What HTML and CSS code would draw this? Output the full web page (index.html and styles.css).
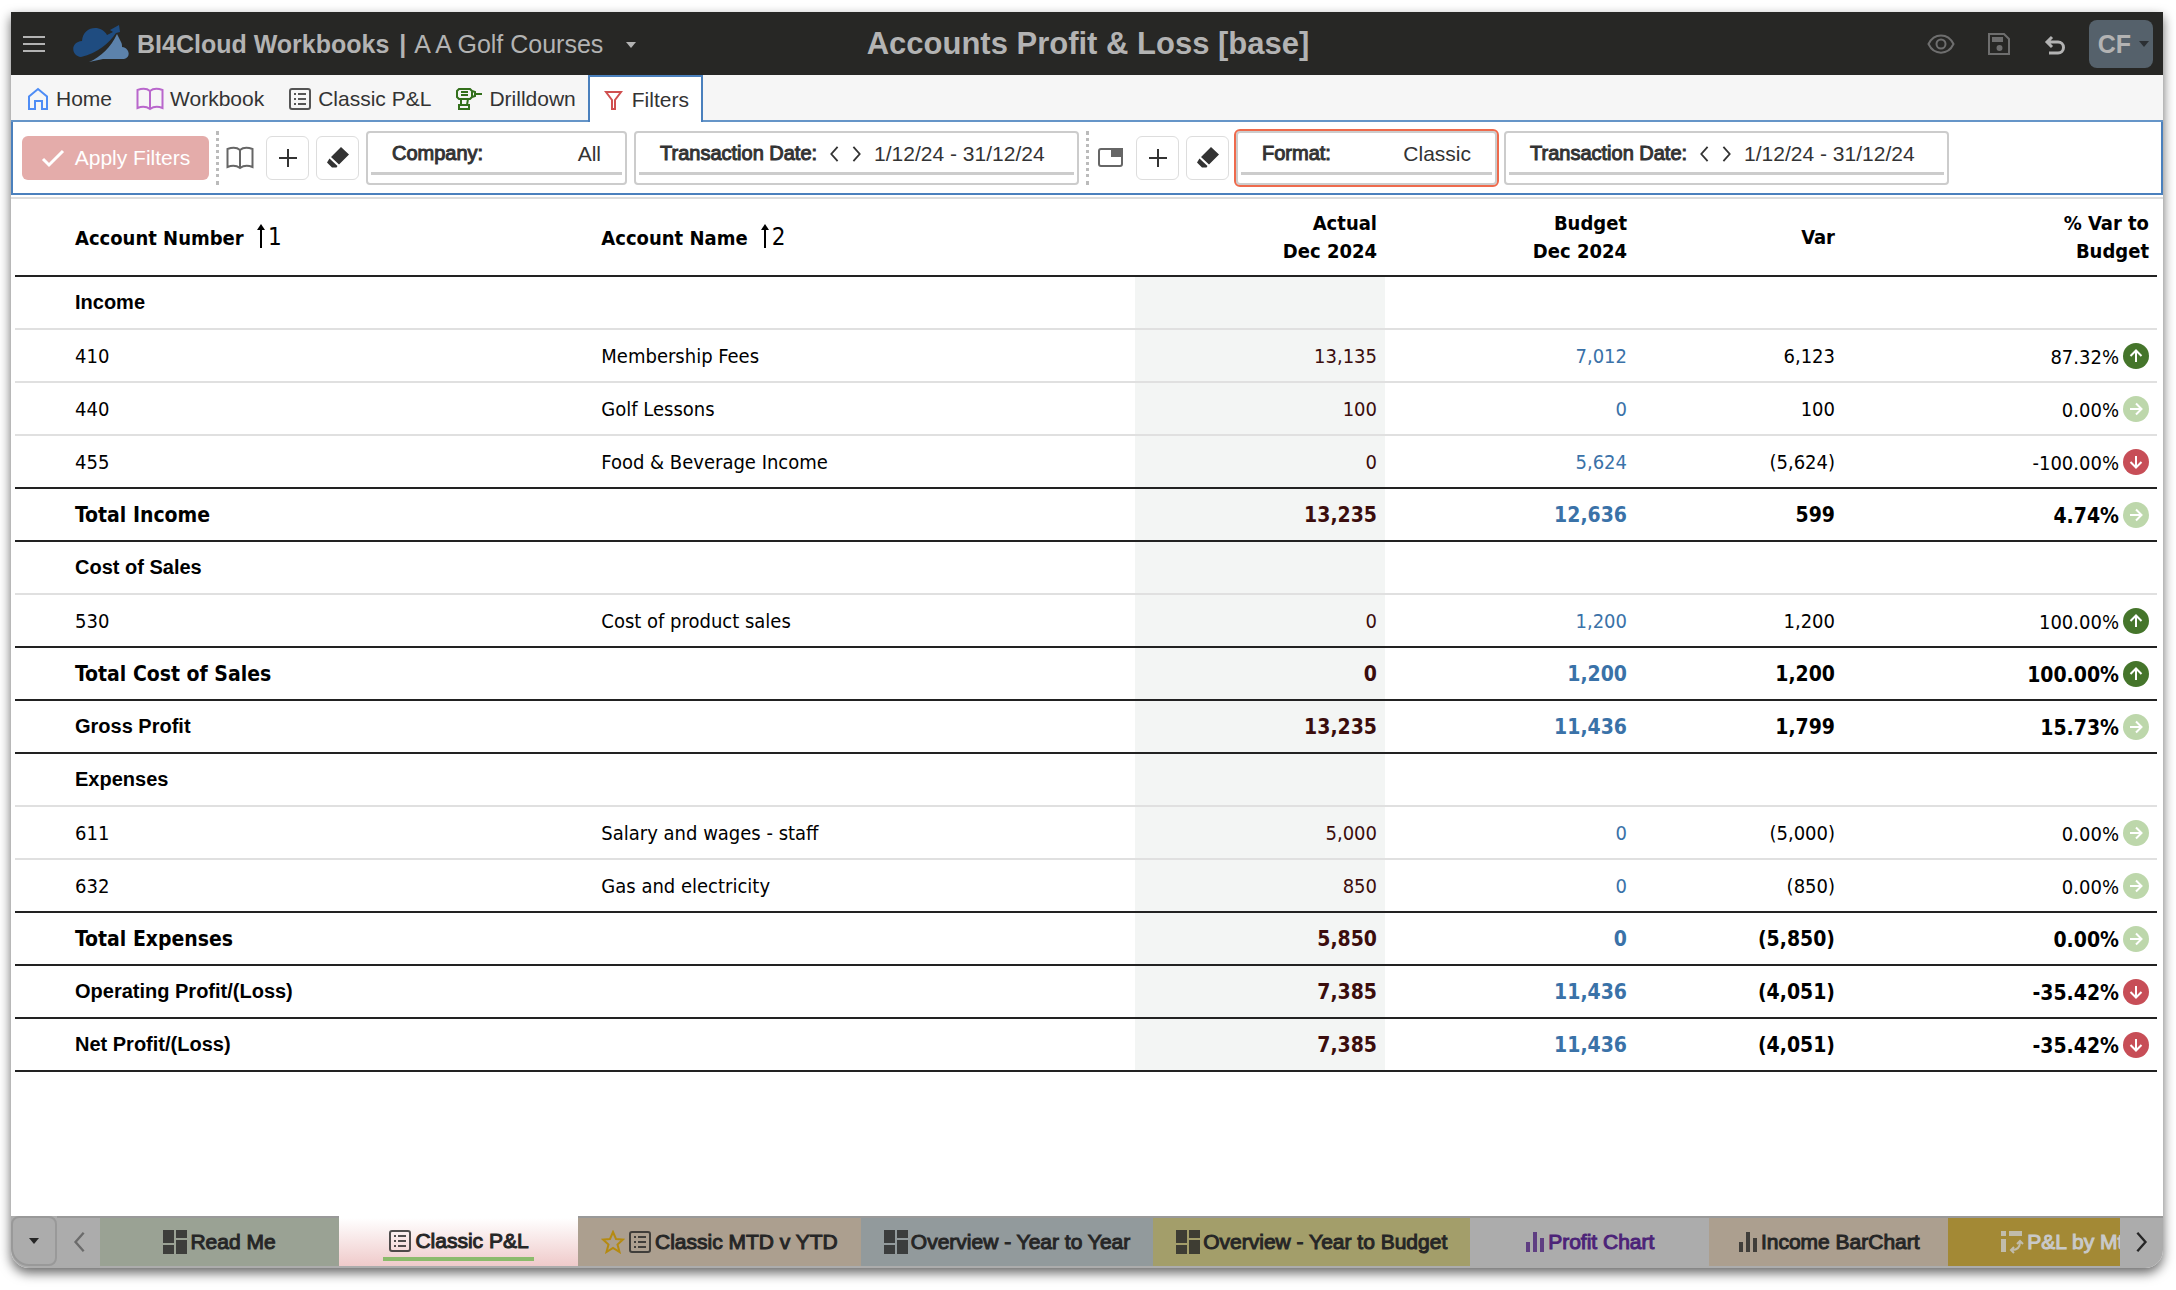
FILE: index.html
```
<!DOCTYPE html>
<html lang="en">
<head>
  <meta charset="UTF-8" />
  <meta name="viewport" content="width=device-width, initial-scale=1.0" />
  <title>BI4Cloud Workbooks - Accounts Profit &amp; Loss</title>
  <link rel="stylesheet" href="styles.css">
</head>
<body>
  <!-- shared icons -->
  <svg class="sprite" aria-hidden="true">
    <symbol id="i-book" viewBox="0 0 28 24"><path d="M14 4C11 1.500 6 1.500 1.500 3v18c4-1.500 9-1.500 12.500 1 3.500-2.500 8.500-2.500 12.500-1V3c-4.500-1.500-9.500-1.500-12.500 1zm0 0v18"/></symbol>
    <symbol id="i-list" viewBox="0 0 24 24"><rect x="2" y="2" width="20" height="20" rx="2"/><path d="M6 7h2M10 7h8M6 12h2M10 12h8M6 17h2M10 17h8"/></symbol>
    <symbol id="i-dash" viewBox="0 0 24 24"><path d="M0 0h11v13H0zM13 0h11v8H13zM0 15h11v9H0zM13 10h11v14H13z"/></symbol>
    <symbol id="i-bars" viewBox="0 0 20 20"><path d="M1 10h4v10H1zM8 0h4v20H8zM15 6h4v14h-4z"/></symbol>
    <symbol id="i-plus" viewBox="0 0 24 24"><path d="M12 3v18M3 12h18"/></symbol>
    <symbol id="i-eraser" viewBox="0 0 24 24"><path d="M15 1l8 7.500L13 18.500 5 11zM3.500 12.500l8 7.500-1 1.500H6L1 16.500z"/></symbol>
    <symbol id="i-prev" viewBox="0 0 12 20"><path d="M10 2L3 10l7 8"/></symbol>
    <symbol id="i-next" viewBox="0 0 12 20"><path d="M2 2l7 8-7 8"/></symbol>
    <symbol id="i-sort" viewBox="0 0 10 24"><path d="M5 24V3"/><path d="M5 0l4 6H1z" fill="currentColor" stroke="none"/></symbol>
    <symbol id="i-up" viewBox="0 0 26 26"><circle cx="13" cy="13" r="13" fill="#45752b" stroke="none"/><path d="M13 19V7.500M7.500 13L13 7.500l5.500 5.500"/></symbol>
    <symbol id="i-flat" viewBox="0 0 26 26"><circle cx="13" cy="13" r="13" fill="#bdd7ab" stroke="none"/><path d="M7 13h11.500M13 7.500l5.500 5.500-5.500 5.500"/></symbol>
    <symbol id="i-down" viewBox="0 0 26 26"><circle cx="13" cy="13" r="13" fill="#c74e57" stroke="none"/><path d="M13 7v11.500M7.500 13l5.500 5.500 5.500-5.500"/></symbol>
  </svg>

  <div class="app">
    <header class="topbar">
      <div class="brand">
        <button class="plain" aria-label="Menu"><svg class="burger" viewBox="0 0 22 18"><path d="M0 2h22M0 9h22M0 16h22"/></svg></button>
        <svg class="logo" viewBox="0 0 56 38"><path d="M8 32C-2 31-3 17 9 16 10 1 28-1 34 10L40 7 37 5 46 0 47 7 43 8C36 18 25 28 8 32z" fill="#1f4c80"/><path d="M16 37C28 32 38 22 44 9l4 8c1 2 1 3 1 5 8 1 9 11 2 12H30z" fill="#5c82ab"/></svg>
        <span class="brand-name">BI4Cloud Workbooks</span>
        <span class="brand-sep">|</span>
        <button class="plain company">A A Golf Courses <span class="caret"></span></button>
      </div>
      <h1>Accounts Profit &amp; Loss [base]</h1>
      <div class="tools">
        <button class="plain dim" aria-label="View"><svg class="icon wide" viewBox="0 0 28 24"><path d="M1.500 12C7 0.500 21 0.500 26.500 12 21 23.500 7 23.500 1.500 12z"/><circle cx="14" cy="12" r="4.500"/></svg></button>
        <button class="plain dim" aria-label="Save"><svg class="icon" viewBox="0 0 24 24"><path d="M2 2h15l5 5v15H2z"/><path d="M6 6h9v3H6z" fill="currentColor"/><circle cx="12.500" cy="16" r="2" fill="currentColor"/></svg></button>
        <button class="plain" aria-label="Undo"><svg class="icon undo" viewBox="0 0 24 24"><path d="M9 5L4 10l5 5M4 10h11a5 5 0 0 1 0 11H6"/></svg></button>
        <button class="user">CF <span class="caret"></span></button>
      </div>
    </header>

    <nav class="ribbon">
      <a href="#" class="home"><svg class="icon" viewBox="0 0 24 24"><path d="M3 9.500L12 2l9 7.500V22h-5v-8H9v8H3z"/></svg>Home</a>
      <a href="#" class="workbook"><svg class="icon wide"><use href="#i-book"/></svg>Workbook</a>
      <a href="#" class="classic"><svg class="icon"><use href="#i-list"/></svg>Classic P&amp;L</a>
      <a href="#" class="drill"><svg class="icon wide" viewBox="0 0 28 24"><path d="M4 2h11l2 2v6l-2 2H4l-2-2V4zM17 4l3 1v4l-3 1M20 7h7M6 5h7M6 8h7M6 12v6h6l1-6M4 18h10v4H4z"/></svg>Drilldown</a>
      <a href="#" class="filters active"><svg class="icon" viewBox="0 0 24 24"><path d="M4 4h15l-6 8v9h-3v-9z"/></svg>Filters</a>
    </nav>

    <section class="filterbar">
      <button class="apply" disabled><svg class="icon" viewBox="0 0 24 24"><path d="M2 13l6 6L22 5"/></svg>Apply Filters</button>
      <span class="grip"></span>
      <svg class="icon wide scope"><use href="#i-book"/></svg>
      <button class="square" aria-label="Add filter"><svg class="icon"><use href="#i-plus"/></svg></button>
      <button class="square" aria-label="Clear filters"><svg class="icon solid"><use href="#i-eraser"/></svg></button>
      <button class="filter short"><span class="row"><b>Company:</b><span>All</span></span></button>
      <button class="filter date"><span class="row"><b>Transaction Date:</b><svg class="step"><use href="#i-prev"/></svg><svg class="step"><use href="#i-next"/></svg><span>1/12/24 - 31/12/24</span></span></button>
      <span class="grip"></span>
      <svg class="icon wide scope" viewBox="0 0 28 24"><rect x="3" y="3" width="23" height="17" rx="2"/><path d="M16 3h10v7H16z" fill="currentColor"/></svg>
      <button class="square" aria-label="Add sheet filter"><svg class="icon"><use href="#i-plus"/></svg></button>
      <button class="square" aria-label="Clear sheet filters"><svg class="icon solid"><use href="#i-eraser"/></svg></button>
      <button class="filter short marked"><span class="row"><b>Format:</b><span>Classic</span></span></button>
      <button class="filter date"><span class="row"><b>Transaction Date:</b><svg class="step"><use href="#i-prev"/></svg><svg class="step"><use href="#i-next"/></svg><span>1/12/24 - 31/12/24</span></span></button>
    </section>

    <main>
      <table class="report">
        <colgroup><col class="c-num"><col><col class="c-amount"><col class="c-amount"><col class="c-var"><col class="c-pct"></colgroup>
        <thead>
          <tr>
            <th>Account Number <span class="sort"><svg><use href="#i-sort"/></svg>1</span></th>
            <th>Account Name <span class="sort"><svg><use href="#i-sort"/></svg>2</span></th>
            <th>Actual<br>Dec 2024</th>
            <th>Budget<br>Dec 2024</th>
            <th>Var</th>
            <th>% Var to<br>Budget</th>
          </tr>
        </thead>
        <tbody>
          <tr class="section"><td>Income</td><td></td><td></td><td></td><td></td><td></td></tr>
          <tr><td>410</td><td>Membership Fees</td><td>13,135</td><td>7,012</td><td>6,123</td><td>87.32%<svg class="trend"><use href="#i-up"/></svg></td></tr>
          <tr><td>440</td><td>Golf Lessons</td><td>100</td><td>0</td><td>100</td><td>0.00%<svg class="trend"><use href="#i-flat"/></svg></td></tr>
          <tr class="ruled"><td>455</td><td>Food &amp; Beverage Income</td><td>0</td><td>5,624</td><td>(5,624)</td><td>-100.00%<svg class="trend"><use href="#i-down"/></svg></td></tr>
          <tr class="total ruled"><td>Total Income</td><td></td><td>13,235</td><td>12,636</td><td>599</td><td>4.74%<svg class="trend"><use href="#i-flat"/></svg></td></tr>
          <tr class="section"><td>Cost of Sales</td><td></td><td></td><td></td><td></td><td></td></tr>
          <tr class="ruled"><td>530</td><td>Cost of product sales</td><td>0</td><td>1,200</td><td>1,200</td><td>100.00%<svg class="trend"><use href="#i-up"/></svg></td></tr>
          <tr class="total ruled"><td>Total Cost of Sales</td><td></td><td>0</td><td>1,200</td><td>1,200</td><td>100.00%<svg class="trend"><use href="#i-up"/></svg></td></tr>
          <tr class="total summary ruled"><td>Gross Profit</td><td></td><td>13,235</td><td>11,436</td><td>1,799</td><td>15.73%<svg class="trend"><use href="#i-flat"/></svg></td></tr>
          <tr class="section"><td>Expenses</td><td></td><td></td><td></td><td></td><td></td></tr>
          <tr><td>611</td><td>Salary and wages - staff</td><td>5,000</td><td>0</td><td>(5,000)</td><td>0.00%<svg class="trend"><use href="#i-flat"/></svg></td></tr>
          <tr class="ruled"><td>632</td><td>Gas and electricity</td><td>850</td><td>0</td><td>(850)</td><td>0.00%<svg class="trend"><use href="#i-flat"/></svg></td></tr>
          <tr class="total ruled"><td>Total Expenses</td><td></td><td>5,850</td><td>0</td><td>(5,850)</td><td>0.00%<svg class="trend"><use href="#i-flat"/></svg></td></tr>
          <tr class="total summary ruled"><td>Operating Profit/(Loss)</td><td></td><td>7,385</td><td>11,436</td><td>(4,051)</td><td>-35.42%<svg class="trend"><use href="#i-down"/></svg></td></tr>
          <tr class="total summary ruled"><td>Net Profit/(Loss)</td><td></td><td>7,385</td><td>11,436</td><td>(4,051)</td><td>-35.42%<svg class="trend"><use href="#i-down"/></svg></td></tr>
        </tbody>
      </table>
    </main>

    <footer class="sheets">
      <button class="sheet-nav boxed" aria-label="All sheets"><span class="caret"></span></button>
      <button class="sheet-nav faded" aria-label="Previous"><svg class="chevron"><use href="#i-prev"/></svg></button>
      <div class="tabs">
        <button class="tab sage"><svg class="icon fill"><use href="#i-dash"/></svg>Read Me</button>
        <button class="tab current"><span class="underlined"><svg class="icon"><use href="#i-list"/></svg>Classic P&amp;L</span></button>
        <button class="tab tan"><svg class="icon star" viewBox="0 0 24 24"><path d="M12 2l3 7 7 .5-5.500 5 2 7.500-6.500-4-6.500 4 2-7.500-5.500-5L9 9z"/></svg><svg class="icon"><use href="#i-list"/></svg>Classic MTD v YTD</button>
        <button class="tab slate"><svg class="icon fill"><use href="#i-dash"/></svg>Overview - Year to Year</button>
        <button class="tab olive"><svg class="icon fill"><use href="#i-dash"/></svg>Overview - Year to Budget</button>
        <button class="tab purple"><svg class="icon bars"><use href="#i-bars"/></svg>Profit Chart</button>
        <button class="tab tan"><svg class="icon bars"><use href="#i-bars"/></svg>Income BarChart</button>
        <button class="tab gold"><svg class="icon" viewBox="0 0 24 24"><path d="M1 1h5v5H1zM9 1h13v5H9zM1 9h5v13H1z" fill="currentColor" stroke="none"/><path d="M12 20c6 0 8-3 8-8M17 14l3-3 3 3M14 17l-3 3 3 3"/></svg>P&amp;L by Mth</button>
      </div>
      <button class="sheet-nav" aria-label="Next"><svg class="chevron"><use href="#i-next"/></svg></button>
    </footer>
  </div>
</body>
</html>
```

FILE: styles.css
```
* {
  margin: 0;
  padding: 0;
  box-sizing: border-box;
}

body {
  background-color: #fff;
  color: #333;
  font-family: "Liberation Sans", Arial, sans-serif;
  font-size: 21px;
}

button {
  font: inherit;
  color: inherit;
  border: none;
  background: none;
  cursor: pointer;
}

a {
  color: inherit;
  text-decoration: none;
}

svg {
  fill: none;
  stroke: currentColor;
  stroke-width: 2;
  flex-shrink: 0;
}

.sprite {
  display: none;
}

.icon {
  width: 24px;
  height: 24px;
}

.icon.wide {
  width: 28px;
}

.icon.solid,
.icon.fill,
.icon.bars {
  fill: currentColor;
  stroke: none;
}

.caret {
  display: inline-block;
  border: 5px solid transparent;
  border-top: 6px solid currentColor;
  border-bottom: none;
}

.app {
  display: flex;
  flex-direction: column;
  min-height: calc(100vh - 34px);
  margin: 12px 13px 22px 11px;
  border-radius: 0 0 18px 18px;
  overflow: hidden;
  box-shadow: 0 5px 12px rgba(0, 0, 0, 0.6);
}

/* top bar */
.topbar {
  display: grid;
  grid-template-columns: 1fr auto 1fr;
  align-items: center;
  height: 63px;
  padding: 1px 10px 0 12px;
  background-color: #272725;
  color: #b3b3b3;
}

.topbar h1 {
  font-size: 31px;
  font-weight: bold;
}

.brand {
  display: flex;
  align-items: center;
  font-size: 25px;
}

.burger {
  display: block;
  width: 22px;
  height: 18px;
}

.logo {
  width: 56px;
  height: 38px;
  margin: 0 8px 0 28px;
  stroke: none;
}

.brand-name,
.brand-sep {
  font-weight: bold;
}

.brand-sep {
  margin: 0 8px 0 10px;
}

.company .caret {
  margin: 0 0 5px 16px;
}

.tools {
  display: flex;
  align-items: center;
  justify-content: flex-end;
  gap: 32px;
}

.tools .icon {
  display: block;
}

.undo {
  stroke-width: 3;
}

.dim {
  color: #6e6e6e;
}

.user {
  display: flex;
  align-items: center;
  justify-content: flex-end;
  gap: 8px;
  width: 64px;
  height: 48px;
  margin-left: -10px;
  padding-right: 4px;
  border-radius: 8px;
  background-color: #55616b;
  font-size: 25px;
  font-weight: bold;
}

.user .caret {
  color: #2b2f33;
}

/* ribbon */
.ribbon {
  display: flex;
  height: 47px;
  padding-left: 3px;
  background-color: #f6f6f6;
  border-bottom: 2px solid #6595c8;
}

.ribbon a {
  display: flex;
  align-items: center;
  gap: 6px;
  height: 47px;
  padding: 0 12px;
}

.home .icon {
  color: #4f8df5;
}

.workbook .icon {
  color: #b967cc;
}

.classic .icon {
  color: #555;
}

.drill .icon {
  color: #33701c;
}

.filters .icon {
  color: #d05050;
}

.ribbon .active {
  background-color: #fff;
  border: 2px solid #4a80bd;
  border-bottom: none;
}

/* filter bar */
.filterbar {
  display: flex;
  align-items: center;
  gap: 7px;
  height: 73px;
  padding-left: 9px;
  border: 2px solid #4a80bd;
  border-top: none;
  background-color: #fff;
}

.apply {
  display: flex;
  align-items: center;
  justify-content: center;
  gap: 10px;
  width: 187px;
  height: 44px;
  border-radius: 6px;
  background-color: #e4acaa;
  color: #fff;
}

.apply .icon {
  stroke-width: 3;
}

.grip {
  height: 54px;
  border-left: 3px dotted #bbb;
}

.scope {
  margin-right: 5px;
  color: #666;
}

.square {
  display: flex;
  align-items: center;
  justify-content: center;
  width: 43px;
  height: 44px;
  border: 1px solid #ddd;
  border-radius: 6px;
}

.filter {
  height: 54px;
  padding: 0 3px 8px;
  border: 2px solid #ccc;
  border-radius: 4px;
}

.filter .row {
  display: flex;
  align-items: center;
  height: 42px;
  gap: 11px;
  padding: 3px 21px 0;
  border-bottom: 3px solid #ccc;
}

.filter b {
  font-size: 20px;
  font-weight: normal;
  -webkit-text-stroke: 1px currentColor;
}

.short {
  width: 261px;
}

.short .row {
  justify-content: space-between;
}

.date {
  width: 445px;
}

.marked {
  outline: 2px solid #ee6a4c;
}

.step {
  width: 12px;
  height: 18px;
}

/* report */
main {
  flex: 1;
  margin-top: 2px;
  padding: 0 6px 0 4px;
  background-color: #fff;
  border-top: 2px solid #ddd;
}

.report {
  width: 100%;
  border-collapse: collapse;
  table-layout: fixed;
  color: #000;
  font-family: "DejaVu Sans Condensed", "DejaVu Sans", sans-serif;
  font-size: 20px;
}

.c-num {
  width: 27%;
}

.c-amount {
  width: 250px;
}

.c-var {
  width: 208px;
}

.c-pct {
  width: 314px;
}

.report th {
  height: 77px;
  padding: 0 8px;
  border-bottom: 2px solid #222;
  line-height: 28px;
  text-align: right;
}

.report td {
  height: 53px;
  padding: 0 8px;
  border-bottom: 2px solid #e0e0e0;
  text-align: right;
}

.report th:nth-child(-n+2),
.report td:nth-child(-n+2) {
  text-align: left;
}

.report th:first-child,
.report td:first-child {
  padding-left: 60px;
}

.report td:nth-child(3) {
  background-color: #f3f5f4;
  color: #3b0d0d;
}

.report td:nth-child(4) {
  color: #3a72a8;
}

.report .ruled td {
  border-bottom: 2px solid #222;
}

.total td,
.section td {
  font-weight: bold;
}

.total td {
  font-size: 21px;
}

.section td:first-child,
.summary td:first-child {
  font-family: "Liberation Sans", Arial, sans-serif;
  font-size: 20px;
}

.sort {
  font-size: 24px;
  font-weight: normal;
}

.sort svg {
  width: 10px;
  height: 24px;
  margin: 0 2px 0 6px;
  vertical-align: -3px;
}

.trend {
  width: 26px;
  height: 26px;
  margin-left: 4px;
  vertical-align: -5px;
  color: #fff;
}

/* sheet tabs */
.sheets {
  display: flex;
  height: 52px;
  padding-bottom: 2px;
  background-color: #acacac;
  color: #262626;
}

.sheet-nav {
  display: flex;
  flex: none;
  align-items: center;
  justify-content: center;
  width: 43px;
  border-top: 2px solid #999;
}

.boxed {
  width: 46px;
  border: 2px solid #999;
  border-radius: 8px 8px 8px 18px;
}

.faded {
  color: #6b6b6b;
}

.chevron {
  width: 14px;
  height: 24px;
}

.tabs {
  display: flex;
  flex: 1;
  min-width: 0;
  overflow: hidden;
}

.tab {
  display: flex;
  flex: none;
  align-items: center;
  justify-content: center;
  gap: 3px;
  min-width: 239px;
  padding: 0 23px;
  border-top: 2px solid #999;
  white-space: nowrap;
  -webkit-text-stroke: 1px currentColor;
}

.tab .icon {
  opacity: 0.8;
}

.tab .bars {
  width: 20px;
  height: 20px;
}

.tab .star {
  color: #b58a10;
  opacity: 1;
}

.sage {
  background-color: #9aa294;
}

.tan {
  background-color: #ac9f8f;
}

.slate {
  background-color: #929a9c;
}

.olive {
  background-color: #a39e6a;
}

.purple {
  color: #4c2378;
}

.gold {
  background-color: #a38935;
  color: #c9c9c9;
}

.current {
  border-top-color: #fff;
  background: linear-gradient(#fff, #efcaca);
}

.underlined {
  display: flex;
  align-items: center;
  gap: 3px;
  padding: 5px 5px 4px;
  border-bottom: 4px solid #8cbb6c;
}
```
